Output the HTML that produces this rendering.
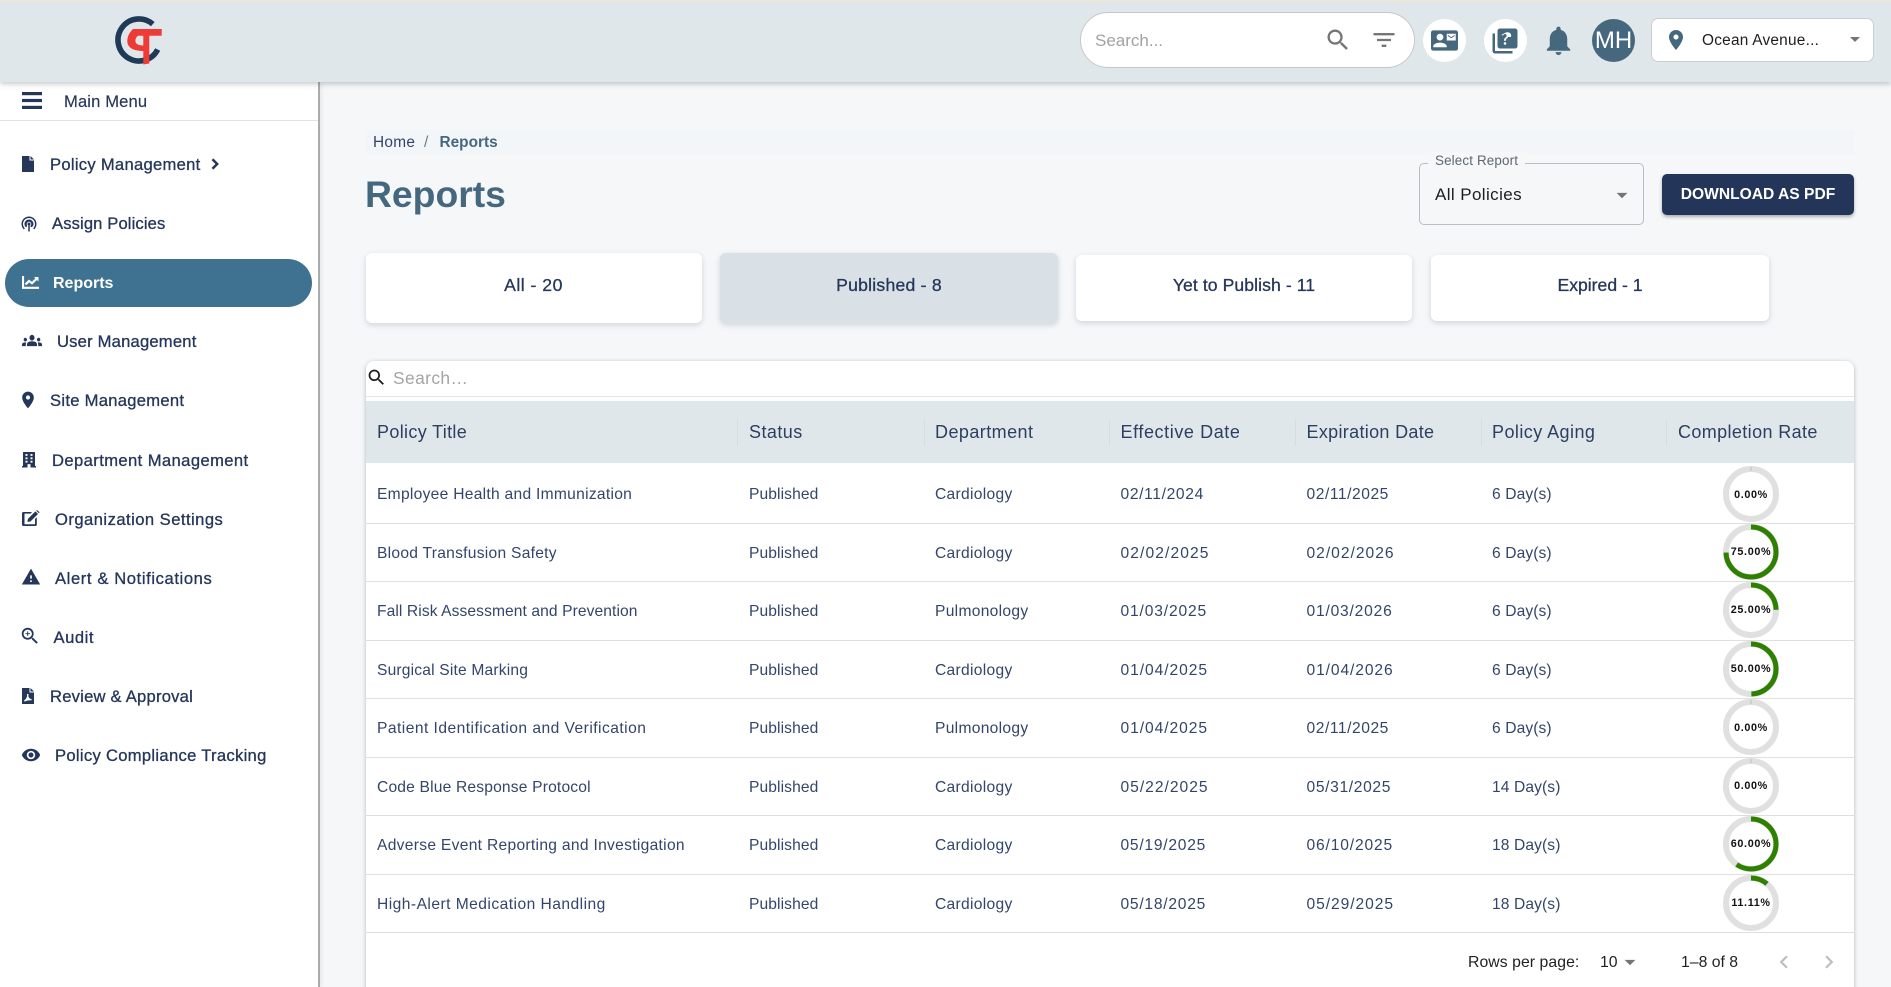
<!DOCTYPE html>
<html><head><meta charset="utf-8"><title>Reports</title>
<style>
*{box-sizing:border-box}
html,body{margin:0;padding:0;width:1891px;height:987px;overflow:hidden;background:#f5f7f9;font-family:"Liberation Sans",Arial,sans-serif;color:#24365a}
#root{position:relative;width:1891px;height:987px;overflow:hidden;background:#f5f7f9}
.a{position:absolute;white-space:nowrap}
svg{display:block;position:absolute}
.nav{position:absolute;font-size:16.6px;line-height:24px;height:24px;color:#24365a;white-space:nowrap;-webkit-text-stroke:.3px #24365a}
.ic{fill:#24365a}
.card{position:absolute;background:#fff;border-radius:6px;box-shadow:0 2px 6px rgba(40,60,80,.18);text-align:center;font-size:17.6px;line-height:20px;color:#24365a;-webkit-text-stroke:.3px #24365a}
.th{position:absolute;top:420px;font-size:18px;line-height:24px;color:#2c3f60;white-space:nowrap}
.td{position:absolute;font-size:15.6px;line-height:24px;color:#33456a;white-space:nowrap}
.p{letter-spacing:.1px}.c{letter-spacing:.3px}.g{letter-spacing:.1px}
.sep{position:absolute;top:419px;width:1px;height:27px;background:#d5dde2}
.hr{position:absolute;left:366px;width:1488px;height:1px;background:#dedfe1}
.pc{position:absolute;width:60px;text-align:center;font-size:10.8px;line-height:14px;font-weight:700;letter-spacing:.65px;color:#111}
</style></head><body><div id="root">

<!-- topbar -->
<div class="a" style="left:0;top:0;width:1891px;height:82px;background:#e0e7eb;border-top:1px solid #f3e6cc;box-shadow:0 2px 5px rgba(60,60,80,.28);z-index:3"></div>
<div style="position:absolute;left:0;top:0;z-index:4;width:1891px;height:82px">
<svg style="left:110px;top:8px" width="60" height="60" viewBox="110 8 60 60">
<path d="M152.8 24.15A21 21 0 1 0 157.7 49.5" fill="none" stroke="#1f3a56" stroke-width="5.6"/>
<path fill-rule="evenodd" d="M133 29H161.7V35.7H149.3V63.5L143.3 64.5V51C134 51 127.3 48 127.3 41C127.3 36 130 32 133 29ZM143.3 35.7H138C135 38 134.5 42 137 44C138.5 45 141 45.5 143.3 45.5Z" fill="#ee3b36"/>
</svg>
<!-- search -->
<div class="a" style="left:1080px;top:12px;width:335px;height:56px;background:#fff;border:1px solid #c4c8cc;border-radius:28px"></div>
<div class="a" style="left:1095px;top:28.5px;font-size:17px;line-height:24px;color:#a2a2a2">Search...</div>
<svg style="left:1324px;top:26px" width="28" height="28" viewBox="0 0 24 24" fill="#757575"><path d="M15.5 14h-.79l-.28-.27C15.41 12.59 16 11.11 16 9.5 16 5.91 13.09 3 9.5 3S3 5.91 3 9.5 5.91 16 9.5 16c1.61 0 3.09-.59 4.23-1.57l.27.28v.79l5 4.99L20.49 19l-4.99-5zm-6 0C7.01 14 5 11.99 5 9.5S7.01 5 9.5 5 14 7.01 14 9.5 11.99 14 9.5 14z"/></svg>
<svg style="left:1370px;top:26px" width="28" height="28" viewBox="0 0 24 24" fill="#757575"><path d="M10 18h4v-2h-4v2zM3 6v2h18V6H3zm3 7h12v-2H6v2z"/></svg>
<div class="a" style="left:1423px;top:19px;width:43px;height:43px;background:#fff;border-radius:50%"></div>
<svg style="left:1431px;top:27.3px" width="27" height="27" viewBox="0 0 24 24" fill="#46687e"><path d="M21 8V7l-3 2-3-2v1l3 2 3-2zm1-5H2C.9 3 0 3.9 0 5v14c0 1.1.9 2 2 2h20c1.1 0 1.99-.9 1.99-2L24 5c0-1.1-.9-2-2-2zM8 6c1.66 0 3 1.34 3 3s-1.34 3-3 3-3-1.34-3-3 1.34-3 3-3zm6 12H2v-1c0-2 4-3.1 6-3.1s6 1.1 6 3.1v1zm8-6h-8V6h8v6z"/></svg>
<div class="a" style="left:1484px;top:19px;width:43px;height:43px;background:#fff;border-radius:50%"></div>
<svg style="left:1490px;top:25.5px" width="30" height="30" viewBox="0 0 24 24" fill="#46687e"><path d="M4 6H2v14c0 1.1.9 2 2 2h14v-2H4V6zm16-4H8c-1.1 0-2 .9-2 2v12c0 1.1.9 2 2 2h12c1.1 0 2-.9 2-2V4c0-1.1-.9-2-2-2zm-7.99 13c-.59 0-1.05-.47-1.05-1.05 0-.59.47-1.04 1.05-1.04.59 0 1.04.45 1.04 1.04-.01.58-.45 1.05-1.04 1.05zm2.5-6.17c-.63.93-1.23 1.21-1.56 1.81-.13.24-.18.4-.18 1.18h-1.52c0-.41-.06-1.08.26-1.65.41-.73 1.18-1.16 1.63-1.8.48-.68.21-1.94-1.14-1.94-.88 0-1.32.67-1.5 1.23l-1.37-.57C11.51 5.96 12.48 5 13.99 5c1.26 0 2.13.57 2.57 1.29.38.61.6 1.76.02 2.54z"/></svg>
<svg style="left:1541px;top:23.4px" width="35" height="35" viewBox="0 0 24 24" fill="#46687e"><path d="M12 22c1.1 0 2-.9 2-2h-4c0 1.1.9 2 2 2zm6-6v-5c0-3.07-1.63-5.64-4.5-6.32V4c0-.83-.67-1.5-1.5-1.5s-1.5.67-1.5 1.5v.68C7.64 5.36 6 7.92 6 11v5l-2 2v1h16v-1l-2-2z"/></svg>
<div class="a" style="left:1592px;top:19px;width:43px;height:43px;background:#46687e;border-radius:50%;color:#fff;text-align:center;font-size:24px;line-height:43px">MH</div>
<div class="a" style="left:1651px;top:18px;width:223px;height:44px;background:#fff;border:1px solid #c8cdd1;border-radius:7px"></div>
<svg style="left:1664px;top:28px" width="24" height="24" viewBox="0 0 24 24" fill="#46687e"><path d="M12 2C8.13 2 5 5.13 5 9c0 5.25 7 13 7 13s7-7.75 7-13c0-3.87-3.13-7-7-7zm0 9.5c-1.38 0-2.5-1.12-2.5-2.5s1.12-2.5 2.5-2.5 2.5 1.12 2.5 2.5-1.12 2.5-2.5 2.5z"/></svg>
<div class="a" style="left:1702px;top:29px;font-size:15.4px;line-height:24px;color:#1e1e1e;letter-spacing:.24px">Ocean Avenue...</div>
<svg style="left:1843px;top:27px" width="24" height="24" viewBox="0 0 24 24" fill="#757575"><path d="M7 10l5 5 5-5z"/></svg>
</div>

<!-- sidebar -->
<div class="a" style="left:0;top:82px;width:320px;height:905px;background:#fff;border-right:2px solid #a9abae;box-shadow:2px 0 4px rgba(0,0,0,.06)"></div>
<div class="a" style="left:0;top:120px;width:318px;height:1px;background:#e2e2e2"></div>
<svg class="ic" style="left:22px;top:92px" width="20" height="17" viewBox="0 0 20 17"><rect width="20" height="3.2" y="0"/><rect width="20" height="3.2" y="6.9"/><rect width="20" height="3.2" y="13.8"/></svg>
<div class="nav" style="left:64px;top:90px;-webkit-text-stroke:.15px #24365a;letter-spacing:.13px">Main Menu</div>

<svg class="ic" style="left:22px;top:156px" width="12" height="16" viewBox="0 0 12 16"><path d="M0 0H7.5V4.5H12V16H0ZM8.5 0 12 3.5H8.5Z"/></svg>
<div class="nav" style="left:50px;top:152.5px;letter-spacing:.28px">Policy Management</div>
<svg class="ic" style="left:205px;top:154px" width="20" height="20" viewBox="0 0 24 24"><path d="M10 6 8.59 7.41 13.17 12l-4.58 4.59L10 18l6-6z" stroke="#24365a" stroke-width="1"/></svg>

<svg class="ic" style="left:20px;top:214.5px" width="18" height="18" viewBox="0 0 24 24"><path d="M14 12c0 .74-.4 1.38-1 1.72V22h-2v-8.28c-.6-.35-1-.98-1-1.72 0-1.1.9-2 2-2s2 .9 2 2zm-2-6c-3.31 0-6 2.69-6 6 0 1.74.75 3.31 1.94 4.4l1.42-1.42C9.53 14.25 9 13.19 9 12c0-1.66 1.34-3 3-3s3 1.34 3 3c0 1.19-.53 2.25-1.36 2.98l1.42 1.42C17.25 15.31 18 13.74 18 12c0-3.31-2.69-6-6-6zm0-4C6.48 2 2 6.48 2 12c0 2.85 1.2 5.41 3.11 7.24l1.42-1.42C4.98 16.36 4 14.29 4 12c0-4.41 3.59-8 8-8s8 3.59 8 8c0 2.29-.98 4.36-2.53 5.82l1.42 1.42C20.8 17.41 22 14.85 22 12c0-5.52-4.48-10-10-10z"/></svg>
<div class="nav" style="left:52px;top:212px;letter-spacing:.12px">Assign Policies</div>

<div class="a" style="left:5px;top:259px;width:307px;height:48px;background:#3f7190;border-radius:24px"></div>
<svg style="left:22px;top:275.5px" width="17" height="13" viewBox="0 0 17 13"><path d="M1 0V11.8H17" fill="none" stroke="#fff" stroke-width="2.2"/><path d="M3.5 8.5 7 5 10 7.2 14.5 2.8" fill="none" stroke="#fff" stroke-width="2.2"/><path d="M12 1H16.5V5.5Z" fill="#fff"/></svg>
<div class="nav" style="left:53px;top:271.5px;color:#fff;font-weight:700;-webkit-text-stroke:0;font-size:16px">Reports</div>

<svg class="ic" style="left:22px;top:334px" width="20" height="13" viewBox="0 5 24 14" preserveAspectRatio="none"><path d="M12 12.75c1.63 0 3.07.39 4.24.9 1.08.48 1.76 1.56 1.76 2.73V18H6v-1.61c0-1.18.68-2.26 1.76-2.73 1.17-.52 2.61-.91 4.24-.91zM4 13c1.1 0 2-.9 2-2s-.9-2-2-2-2 .9-2 2 .9 2 2 2zm1.13 1.1c-.37-.06-.74-.1-1.13-.1-.99 0-1.93.21-2.78.58C.48 14.9 0 15.62 0 16.43V18h4.5v-1.61c0-.83.23-1.61.63-2.29zM20 13c1.1 0 2-.9 2-2s-.9-2-2-2-2 .9-2 2 .9 2 2 2zm4 3.43c0-.81-.48-1.53-1.22-1.85-.85-.37-1.79-.58-2.78-.58-.39 0-.76.04-1.13.1.4.68.63 1.46.63 2.29V18H24v-1.57zM12 6c1.66 0 3 1.34 3 3s-1.34 3-3 3-3-1.34-3-3 1.34-3 3-3z"/></svg>
<div class="nav" style="left:57px;top:330px;letter-spacing:.2px">User Management</div>

<svg class="ic" style="left:18px;top:390px" width="20" height="20" viewBox="0 0 24 24"><path d="M12 2C8.13 2 5 5.13 5 9c0 5.25 7 13 7 13s7-7.75 7-13c0-3.87-3.13-7-7-7zm0 9.5c-1.38 0-2.5-1.12-2.5-2.5s1.12-2.5 2.5-2.5 2.5 1.12 2.5 2.5-1.12 2.5-2.5 2.5z"/></svg>
<div class="nav" style="left:50px;top:389px;letter-spacing:.28px">Site Management</div>

<svg class="ic" style="left:22px;top:452px" width="14" height="15.5" viewBox="0 0 14 16" preserveAspectRatio="none"><path fill-rule="evenodd" d="M1 0H13V14.5H14V16H0V14.5H1ZM3.5 2V4H5.5V2ZM8.5 2V4H10.5V2ZM3.5 5.5V7.5H5.5V5.5ZM8.5 5.5V7.5H10.5V5.5ZM3.5 9V11H5.5V9ZM8.5 9V11H10.5V9ZM5.5 12.5V16H8.5V12.5Z"/></svg>
<div class="nav" style="left:52px;top:449px;letter-spacing:.4px">Department Management</div>

<svg class="ic" style="left:22px;top:510px" width="18" height="16" viewBox="0 0 18 16"><path fill-rule="evenodd" d="M1.5 2H10L8.5 3.6H2.5V14.2H13V9L14.8 7.2V14.5A1.5 1.5 0 0 1 13.3 16H1.5A1.5 1.5 0 0 1 0 14.5V3.5A1.5 1.5 0 0 1 1.5 2Z"/><path d="M6 8.8 13.4 1.4 16 4 8.6 11.4 5.4 12ZM14.2.6 15 0 17.6 2.2 16.8 3.2Z"/></svg>
<div class="nav" style="left:55px;top:507.5px;letter-spacing:.46px">Organization Settings</div>

<svg class="ic" style="left:21px;top:567px" width="20" height="20" viewBox="0 0 24 24"><path d="M1 21h22L12 2 1 21zm12-3h-2v-2h2v2zm0-4h-2v-4h2v4z"/></svg>
<div class="nav" style="left:55px;top:566.5px;letter-spacing:.6px">Alert &amp; Notifications</div>

<svg class="ic" style="left:19px;top:625.3px" width="22" height="22" viewBox="0 0 24 24"><path d="M15.5 14h-.79l-.28-.27C15.41 12.59 16 11.11 16 9.5 16 5.91 13.09 3 9.5 3S3 5.91 3 9.5 5.91 16 9.5 16c1.61 0 3.09-.59 4.23-1.57l.27.28v.79l5 4.99L20.49 19l-4.99-5zm-6 0C7.01 14 5 11.99 5 9.5S7.01 5 9.5 5 14 7.01 14 9.5 11.99 14 9.5 14z"/><path d="M12 10h-2v2H9v-2H7V9h2V7h1v2h2v1z"/></svg>
<div class="nav" style="left:53.5px;top:625.5px;letter-spacing:.55px">Audit</div>

<svg class="ic" style="left:22px;top:688px" width="12" height="16" viewBox="0 0 12 16"><path fill-rule="evenodd" d="M0 0H7.5V4.5H12V16H0ZM8.5 0 12 3.5H8.5ZM5 6V8.5C4.5 10 3.5 11.5 2 12.6L2.6 13.6C4.2 12.8 6 12.2 9.6 12.2V11C8 11 7 10 6.4 8.5V6Z"/></svg>
<div class="nav" style="left:50px;top:684.5px;letter-spacing:.22px">Review &amp; Approval</div>

<svg class="ic" style="left:21px;top:745px" width="20" height="20" viewBox="0 0 24 24"><path d="M12 4.5C7 4.5 2.73 7.61 1 12c1.73 4.39 6 7.5 11 7.5s9.27-3.11 11-7.5c-1.73-4.39-6-7.5-11-7.5zM12 17c-2.76 0-5-2.24-5-5s2.24-5 5-5 5 2.24 5 5-2.24 5-5 5zm0-8c-1.66 0-3 1.34-3 3s1.34 3 3 3 3-1.34 3-3-1.34-3-3-3z"/></svg>
<div class="nav" style="left:55px;top:743.5px;letter-spacing:.3px">Policy Compliance Tracking</div>

<!-- header area -->
<div class="a" style="left:365px;top:130px;width:1489px;height:24px;background:#f3f6f8"></div>
<div class="a" style="left:373px;top:131px;font-size:15.4px;line-height:24px;color:#33456a;letter-spacing:.3px">Home</div>
<div class="a" style="left:424px;top:131px;font-size:15.4px;line-height:24px;color:#6c7a88">/</div>
<div class="a" style="left:439.5px;top:131px;font-size:15.4px;line-height:24px;font-weight:700;color:#46687f">Reports</div>
<div class="a" style="left:365px;top:170px;font-size:37.3px;line-height:48px;font-weight:700;color:#46687f">Reports</div>

<div class="a" style="left:1419px;top:163px;width:225px;height:62px;border:1px solid #b9bdc1;border-radius:5px"></div>
<div class="a" style="left:1428px;top:152px;background:#f5f7f9;padding:0 7px;font-size:13.4px;line-height:18px;color:#5e6670;letter-spacing:.15px">Select Report</div>
<div class="a" style="left:1435px;top:182.5px;font-size:17px;line-height:24px;color:#1e1e1e;letter-spacing:.4px">All Policies</div>
<svg style="left:1609px;top:182px" width="26" height="26" viewBox="0 0 24 24" fill="#757575"><path d="M7 10l5 5 5-5z"/></svg>
<div class="a" style="left:1662px;top:174px;width:192px;height:41px;background:#233558;border-radius:5px;box-shadow:0 2px 3px rgba(0,0,0,.3);color:#fff;text-align:center;font-size:15.6px;line-height:42px;font-weight:700">DOWNLOAD AS PDF</div>

<!-- cards -->
<div class="card" style="left:365.5px;top:253px;width:336px;height:70px;padding-top:22px;letter-spacing:.5px">All - 20</div>
<div class="card" style="left:720px;top:253px;width:338px;height:70px;padding-top:22px;background:#d9e1e6;letter-spacing:.23px">Published - 8</div>
<div class="card" style="left:1076px;top:255px;width:336px;height:66px;padding-top:20px;letter-spacing:.08px">Yet to Publish - 11</div>
<div class="card" style="left:1431px;top:255px;width:338px;height:66px;padding-top:20px">Expired - 1</div>

<!-- table -->
<div class="a" style="left:366px;top:361px;width:1488px;height:640px;background:#fff;border-radius:8px 8px 0 0;box-shadow:0 1px 4px rgba(60,60,70,.35)"></div>
<svg style="left:366px;top:367px" width="21" height="21" viewBox="0 0 24 24" fill="#1c1c1c"><path d="M15.5 14h-.79l-.28-.27C15.41 12.59 16 11.11 16 9.5 16 5.91 13.09 3 9.5 3S3 5.91 3 9.5 5.91 16 9.5 16c1.61 0 3.09-.59 4.23-1.57l.27.28v.79l5 4.99L20.49 19l-4.99-5zm-6 0C7.01 14 5 11.99 5 9.5S7.01 5 9.5 5 14 7.01 14 9.5 11.99 14 9.5 14z"/></svg>
<div class="a" style="left:393px;top:366px;font-size:17.4px;line-height:24px;color:#a4a4a4;letter-spacing:.4px">Search…</div>
<div class="a" style="left:366px;top:396px;width:1488px;height:1px;background:#e2e3e5"></div>
<div class="a" style="left:366px;top:401px;width:1488px;height:62px;background:#e0e7eb"></div>

<div class="th" style="left:377px;letter-spacing:.34px">Policy Title</div>
<div class="th" style="left:749px;letter-spacing:.44px">Status</div>
<div class="th" style="left:935px;letter-spacing:.44px">Department</div>
<div class="th" style="left:1120.5px;letter-spacing:.59px">Effective Date</div>
<div class="th" style="left:1306.5px;letter-spacing:.32px">Expiration Date</div>
<div class="th" style="left:1492px;letter-spacing:.44px">Policy Aging</div>
<div class="th" style="left:1678px;letter-spacing:.38px">Completion Rate</div>
<div class="sep" style="left:737px"></div><div class="sep" style="left:924px"></div><div class="sep" style="left:1109px"></div><div class="sep" style="left:1295px"></div><div class="sep" style="left:1481px"></div><div class="sep" style="left:1666px"></div>

<div class="hr" style="top:523px"></div><div class="hr" style="top:581px"></div><div class="hr" style="top:640px"></div><div class="hr" style="top:698px"></div><div class="hr" style="top:757px"></div><div class="hr" style="top:815px"></div><div class="hr" style="top:874px"></div><div class="hr" style="top:932px"></div>

<!-- rows -->
<div class="td" style="left:377px;top:482.5px;letter-spacing:.28px">Employee Health and Immunization</div><div class="td p" style="left:749px;top:482.5px">Published</div><div class="td c" style="left:935px;top:482.5px">Cardiology</div><div class="td" style="left:1120.5px;top:482.5px;letter-spacing:.65px">02/11/2024</div><div class="td" style="left:1306.5px;top:482.5px;letter-spacing:.55px">02/11/2025</div><div class="td g" style="left:1492px;top:482.5px">6 Day(s)</div>
<div class="td" style="left:377px;top:541.5px;letter-spacing:.27px">Blood Transfusion Safety</div><div class="td p" style="left:749px;top:541.5px">Published</div><div class="td c" style="left:935px;top:541.5px">Cardiology</div><div class="td" style="left:1120.5px;top:541.5px;letter-spacing:1.1px">02/02/2025</div><div class="td" style="left:1306.5px;top:541.5px;letter-spacing:1px">02/02/2026</div><div class="td g" style="left:1492px;top:541.5px">6 Day(s)</div>
<div class="td" style="left:377px;top:599.5px;letter-spacing:.09px">Fall Risk Assessment and Prevention</div><div class="td p" style="left:749px;top:599.5px">Published</div><div class="td c" style="left:935px;top:599.5px">Pulmonology</div><div class="td" style="left:1120.5px;top:599.5px;letter-spacing:.85px">01/03/2025</div><div class="td" style="left:1306.5px;top:599.5px;letter-spacing:.8px">01/03/2026</div><div class="td g" style="left:1492px;top:599.5px">6 Day(s)</div>
<div class="td" style="left:377px;top:658.5px;letter-spacing:.18px">Surgical Site Marking</div><div class="td p" style="left:749px;top:658.5px">Published</div><div class="td c" style="left:935px;top:658.5px">Cardiology</div><div class="td" style="left:1120.5px;top:658.5px;letter-spacing:.95px">01/04/2025</div><div class="td" style="left:1306.5px;top:658.5px;letter-spacing:.9px">01/04/2026</div><div class="td g" style="left:1492px;top:658.5px">6 Day(s)</div>
<div class="td" style="left:377px;top:716.5px;letter-spacing:.46px">Patient Identification and Verification</div><div class="td p" style="left:749px;top:716.5px">Published</div><div class="td c" style="left:935px;top:716.5px">Pulmonology</div><div class="td" style="left:1120.5px;top:716.5px;letter-spacing:.95px">01/04/2025</div><div class="td" style="left:1306.5px;top:716.5px;letter-spacing:.55px">02/11/2025</div><div class="td g" style="left:1492px;top:716.5px">6 Day(s)</div>
<div class="td" style="left:377px;top:775.5px;letter-spacing:.18px">Code Blue Response Protocol</div><div class="td p" style="left:749px;top:775.5px">Published</div><div class="td c" style="left:935px;top:775.5px">Cardiology</div><div class="td" style="left:1120.5px;top:775.5px;letter-spacing:1px">05/22/2025</div><div class="td" style="left:1306.5px;top:775.5px;letter-spacing:.65px">05/31/2025</div><div class="td g" style="left:1492px;top:775.5px">14 Day(s)</div>
<div class="td" style="left:377px;top:833.5px;letter-spacing:.3px">Adverse Event Reporting and Investigation</div><div class="td p" style="left:749px;top:833.5px">Published</div><div class="td c" style="left:935px;top:833.5px">Cardiology</div><div class="td" style="left:1120.5px;top:833.5px;letter-spacing:.75px">05/19/2025</div><div class="td" style="left:1306.5px;top:833.5px;letter-spacing:.85px">06/10/2025</div><div class="td g" style="left:1492px;top:833.5px">18 Day(s)</div>
<div class="td" style="left:377px;top:892.5px;letter-spacing:.46px">High-Alert Medication Handling</div><div class="td p" style="left:749px;top:892.5px">Published</div><div class="td c" style="left:935px;top:892.5px">Cardiology</div><div class="td" style="left:1120.5px;top:892.5px;letter-spacing:.75px">05/18/2025</div><div class="td" style="left:1306.5px;top:892.5px;letter-spacing:.95px">05/29/2025</div><div class="td g" style="left:1492px;top:892.5px">18 Day(s)</div>

<!-- rings -->
<svg style="left:1721px;top:464px" width="60" height="60" viewBox="0 0 60 60"><circle cx="30" cy="30" r="25" fill="none" stroke="#e0e0e0" stroke-width="6"/><path d="M30 3V7" stroke="#a9cf9b" stroke-width="1"/></svg><div class="pc" style="left:1721px;top:487.5px">0.00%</div>
<svg style="left:1721px;top:522px" width="60" height="60" viewBox="0 0 60 60"><circle cx="30" cy="30" r="25" fill="none" stroke="#e0e0e0" stroke-width="6"/><circle cx="30" cy="30" r="25" fill="none" stroke="#2e8000" stroke-width="5" pathLength="100" stroke-dasharray="75 100" transform="rotate(-90 30 30)"/></svg><div class="pc" style="left:1721px;top:544.5px">75.00%</div>
<svg style="left:1721px;top:580px" width="60" height="60" viewBox="0 0 60 60"><circle cx="30" cy="30" r="25" fill="none" stroke="#e0e0e0" stroke-width="6"/><circle cx="30" cy="30" r="25" fill="none" stroke="#2e8000" stroke-width="5" pathLength="100" stroke-dasharray="25 100" transform="rotate(-90 30 30)"/></svg><div class="pc" style="left:1721px;top:603px">25.00%</div>
<svg style="left:1721px;top:639px" width="60" height="60" viewBox="0 0 60 60"><circle cx="30" cy="30" r="25" fill="none" stroke="#e0e0e0" stroke-width="6"/><circle cx="30" cy="30" r="25" fill="none" stroke="#2e8000" stroke-width="5" pathLength="100" stroke-dasharray="50 100" transform="rotate(-90 30 30)"/></svg><div class="pc" style="left:1721px;top:661.5px">50.00%</div>
<svg style="left:1721px;top:697px" width="60" height="60" viewBox="0 0 60 60"><circle cx="30" cy="30" r="25" fill="none" stroke="#e0e0e0" stroke-width="6"/><path d="M30 3V7" stroke="#a9cf9b" stroke-width="1"/></svg><div class="pc" style="left:1721px;top:720.5px">0.00%</div>
<svg style="left:1721px;top:756px" width="60" height="60" viewBox="0 0 60 60"><circle cx="30" cy="30" r="25" fill="none" stroke="#e0e0e0" stroke-width="6"/><path d="M30 3V7" stroke="#a9cf9b" stroke-width="1"/></svg><div class="pc" style="left:1721px;top:779px">0.00%</div>
<svg style="left:1721px;top:814px" width="60" height="60" viewBox="0 0 60 60"><circle cx="30" cy="30" r="25" fill="none" stroke="#e0e0e0" stroke-width="6"/><circle cx="30" cy="30" r="25" fill="none" stroke="#2e8000" stroke-width="5" pathLength="100" stroke-dasharray="60 100" transform="rotate(-90 30 30)"/></svg><div class="pc" style="left:1721px;top:837px">60.00%</div>
<svg style="left:1721px;top:873px" width="60" height="60" viewBox="0 0 60 60"><circle cx="30" cy="30" r="25" fill="none" stroke="#e0e0e0" stroke-width="6"/><circle cx="30" cy="30" r="25" fill="none" stroke="#2e8000" stroke-width="5" pathLength="100" stroke-dasharray="11.11 100" transform="rotate(-90 30 30)"/></svg><div class="pc" style="left:1721px;top:896px">11.11%</div>

<!-- pagination -->
<div class="a" style="left:1468px;top:951px;font-size:15.8px;line-height:24px;color:#222;letter-spacing:.05px">Rows per page:</div>
<div class="a" style="left:1600px;top:951px;font-size:15.8px;line-height:24px;color:#222">10</div>
<svg style="left:1617px;top:949px" width="26" height="26" viewBox="0 0 24 24" fill="#757575"><path d="M7 10l5 5 5-5z"/></svg>
<div class="a" style="left:1681px;top:951px;font-size:15.8px;line-height:24px;color:#222">1–8 of 8</div>
<svg style="left:1771px;top:949px" width="26" height="26" viewBox="0 0 24 24" fill="#bdbdbd"><path d="M15.41 7.41 14 6l-6 6 6 6 1.41-1.41L10.83 12z"/></svg>
<svg style="left:1816px;top:949px" width="26" height="26" viewBox="0 0 24 24" fill="#bdbdbd"><path d="M10 6 8.59 7.41 13.17 12l-4.58 4.59L10 18l6-6z"/></svg>

</div></body></html>
